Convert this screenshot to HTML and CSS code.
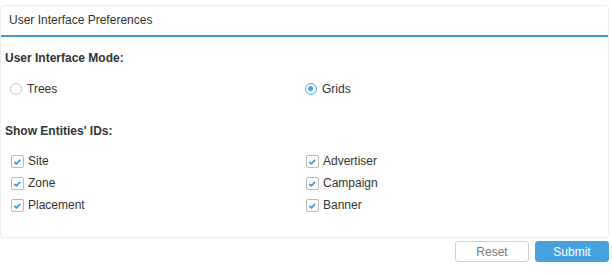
FILE: index.html
```html
<!DOCTYPE html>
<html lang="en">
<head>
    <meta charset="UTF-8">
    <title>User Interface Preferences</title>
    <link rel="stylesheet" href="styles.css">
</head>
<body>
    <div class="panel">
        <div class="panel-head">User Interface Preferences</div>
        <div class="panel-body">
            <div class="seccion">User Interface Mode:</div>
            <div class="fila">
                <label class="opcion"><span class="radio"></span>Trees</label>
                <label class="opcion"><span class="radio activo"></span>Grids</label>
            </div>

            <div class="seccion seccion2">Show Entities' IDs:</div>
            <div class="fila checks">
                <label class="opcion"><span class="check"><svg viewBox="0 0 12 12"><path d="M2.5 6.5 L4.8 8.5 L9 4.2"/></svg></span>Site</label>
                <label class="opcion"><span class="check"><svg viewBox="0 0 12 12"><path d="M2.5 6.5 L4.8 8.5 L9 4.2"/></svg></span>Advertiser</label>
                <label class="opcion"><span class="check"><svg viewBox="0 0 12 12"><path d="M2.5 6.5 L4.8 8.5 L9 4.2"/></svg></span>Zone</label>
                <label class="opcion"><span class="check"><svg viewBox="0 0 12 12"><path d="M2.5 6.5 L4.8 8.5 L9 4.2"/></svg></span>Campaign</label>
                <label class="opcion"><span class="check"><svg viewBox="0 0 12 12"><path d="M2.5 6.5 L4.8 8.5 L9 4.2"/></svg></span>Placement</label>
                <label class="opcion"><span class="check"><svg viewBox="0 0 12 12"><path d="M2.5 6.5 L4.8 8.5 L9 4.2"/></svg></span>Banner</label>
            </div>
        </div>
    </div>

    <div class="botones">
        <button type="button" class="btn btn-reset">Reset</button>
        <button type="button" class="btn btn-submit">Submit</button>
    </div>
</body>
</html>
```

FILE: styles.css
```css
*{
    box-sizing: border-box;
    margin: 0;
    padding: 0;
}
body{
    font-family: "Liberation Sans", Arial, sans-serif;
    font-size: 12px;
    color: #333;
    background: #fff;
}
.panel{
    margin-top: 5px;
    width: 609px;
    height: 233px;
    border: 1px solid #ececec;
    border-radius: 3px;
}
.panel-head{
    height: 31px;
    padding: 7px 0 0 8px;
    font-size: 12px;
    color: #333;
    border-bottom: 2px solid #3d9bdc;
}
.panel-body{
    padding: 14px 4px 0 4px;
}
.seccion{
    font-weight: bold;
    color: #333;
    height: 16px;
}
.seccion2{
    margin-top: 28px;
}
.fila{
    display: grid;
    grid-template-columns: 295px 295px;
    margin-top: 15px;
}
.checks{
    margin-top: 14px;
    row-gap: 8px;
}
.opcion{
    display: flex;
    align-items: center;
    height: 14px;
    color: #333;
}
.radio{
    width: 12px;
    height: 12px;
    border: 1px solid #c8c8c8;
    border-radius: 50%;
    margin: 0 5px 0 5px;
    position: relative;
}
.radio.activo{
    border: 1.5px solid #4aa3e2;
}
.radio.activo::after{
    content: "";
    position: absolute;
    left: 2px;
    top: 2px;
    width: 5px;
    height: 5px;
    border-radius: 50%;
    background: #4aa3e2;
}
.check{
    width: 13px;
    height: 13px;
    border: 1px solid #b9b9b9;
    border-radius: 2px;
    margin: 1px 4px 0 6px;
    display: flex;
}
.check svg{
    width: 11px;
    height: 11px;
    fill: none;
    stroke: #3f9ee0;
    stroke-width: 2;
}
.botones{
    display: flex;
    justify-content: flex-end;
    gap: 6px;
    padding: 3px 3px 0 0;
}
.btn{
    width: 74px;
    height: 21px;
    border-radius: 3px;
    font-family: "Liberation Sans", Arial, sans-serif;
    font-size: 12px;
}
.btn-reset{
    background: #fff;
    border: 1px solid #cfcfcf;
    color: #777;
}
.btn-submit{
    background: #46a2df;
    border: 1px solid #46a2df;
    color: #fff;
}
```
